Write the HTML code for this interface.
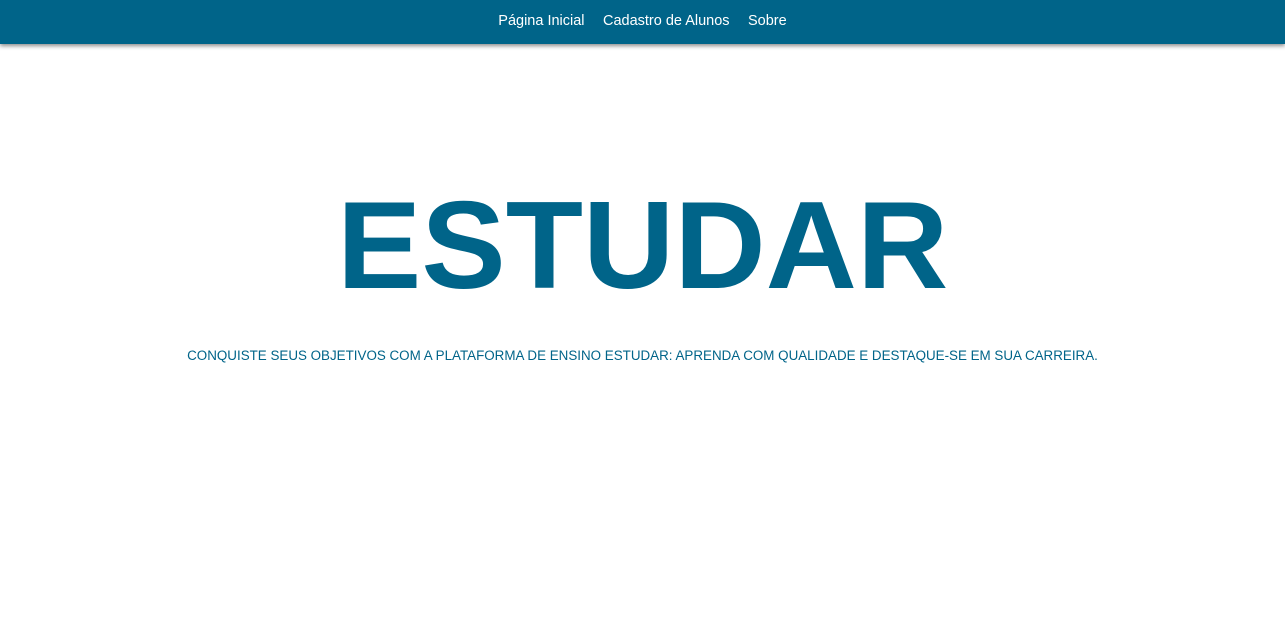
<!DOCTYPE html>
<html><head><meta charset="utf-8"><style>
html,body{margin:0;padding:0;background:#fff;width:1285px;height:622px;overflow:hidden;font-family:"Liberation Sans",sans-serif}
nav{position:absolute;top:0;left:0;width:1285px;height:44px;background:#006489;box-shadow:0 2px 4px rgba(0,0,0,.45);text-align:center}
nav a{color:#fff;text-decoration:none;font-size:14.5px;line-height:43px;margin:0 7px}
h1{position:absolute;top:166px;left:0;width:1285px;margin:0;text-align:center;color:#006489;font-size:124px;font-weight:bold;line-height:160px}
h1 span{display:inline-block;transform:scaleX(1.02)}
p{position:absolute;top:346px;left:0;width:1285px;margin:0;text-align:center;color:#006489;font-size:13.4px;line-height:20px}
</style></head><body>
<nav><a>Página Inicial</a> <a>Cadastro de Alunos</a> <a>Sobre</a></nav>
<h1><span>ESTUDAR</span></h1>
<p>CONQUISTE SEUS OBJETIVOS COM A PLATAFORMA DE ENSINO ESTUDAR: APRENDA COM QUALIDADE E DESTAQUE-SE EM SUA CARREIRA.</p>
</body></html>
